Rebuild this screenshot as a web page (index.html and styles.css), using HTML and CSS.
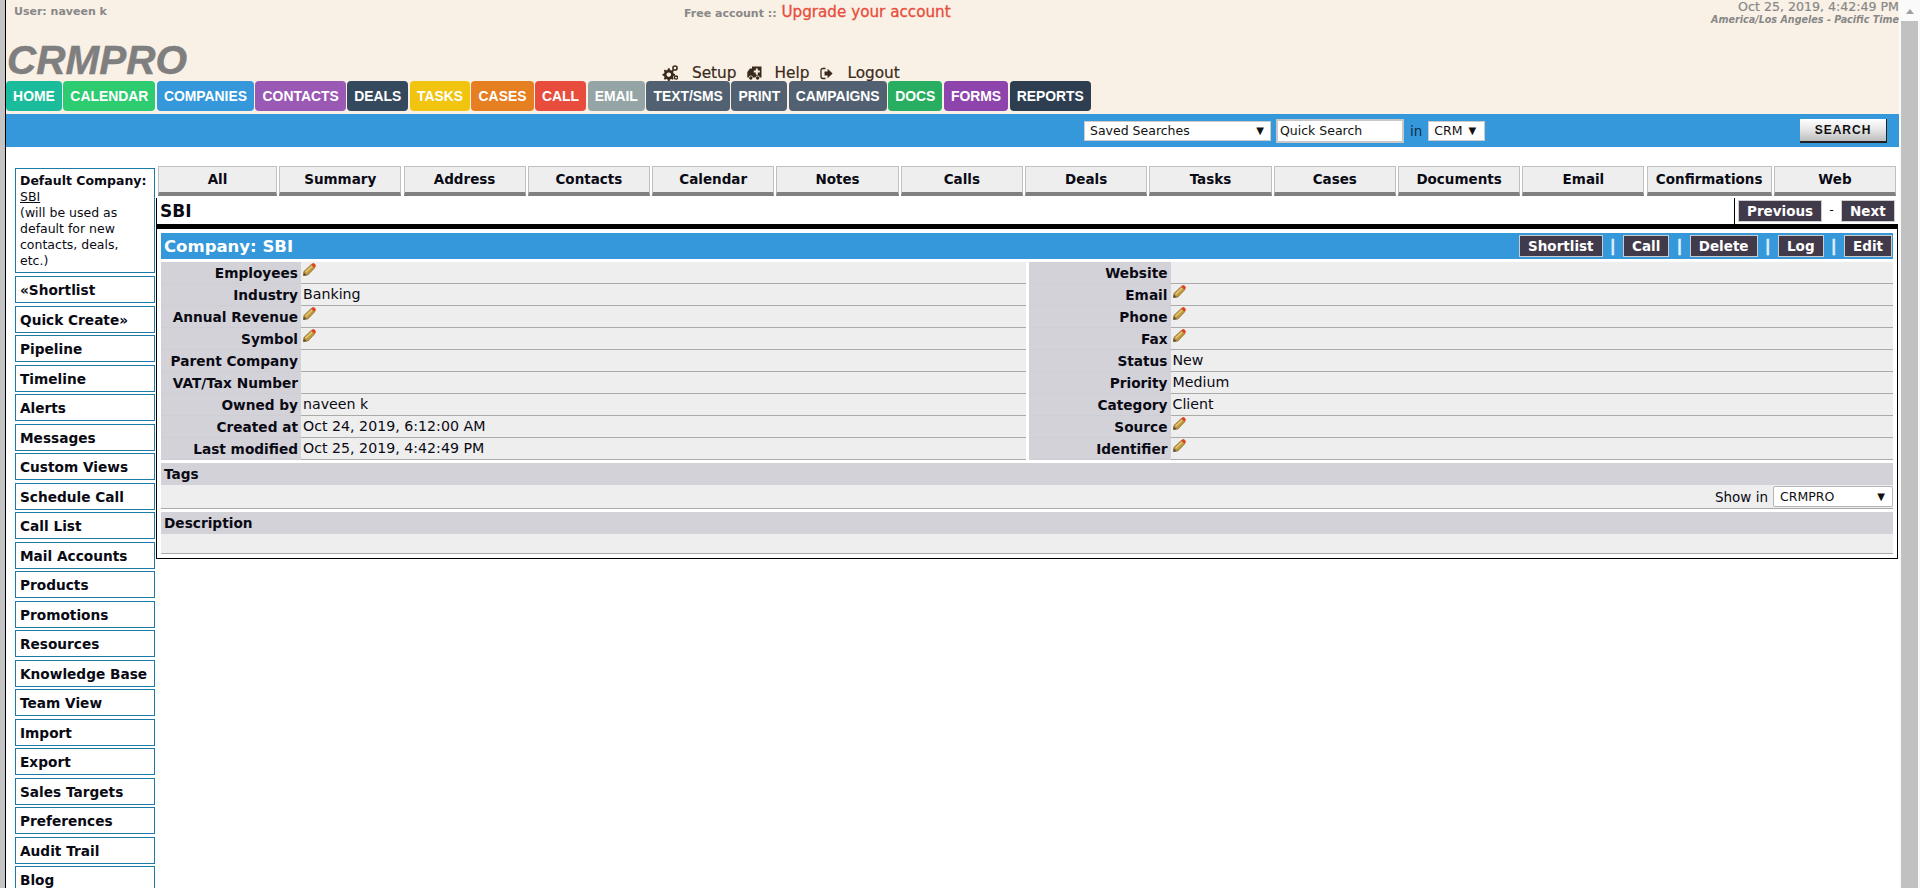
FILE: index.html
```html
<!DOCTYPE html>
<html lang="en">
<head>
    <meta charset="UTF-8">
    <title>CRMPRO - Company: SBI</title>
    <link rel="stylesheet" href="styles.css">
</head>
<body>
    <svg class="icon-defs" aria-hidden="true">
        <symbol id="pencil" viewBox="0 0 13 13">
            <path d="M0.5 12.5 L1 8.4 L8.4 1.4 L11.8 4.7 L4.8 12 Z" fill="#c39a3c" stroke="#87662a" stroke-width="0.8" stroke-linejoin="round"/>
            <path d="M2.6 9.2 L9 3.2" stroke="#e8cf7c" stroke-width="1.2"/>
            <path d="M0.3 12.7 L0.9 9.6 L3.5 12 Z" fill="#55504a"/>
            <path d="M8.4 1.4 L9.6 0.3 Q10.6 -0.2 11.6 0.7 L12.3 1.4 Q13.2 2.4 12.6 3.4 L11.8 4.7 Z" fill="#e8401c"/>
        </symbol>
    </svg>

    <div class="edge-strip"></div>

    <div class="page">
        <header class="top">
            <div class="top-row">
                <div class="user">User: naveen k</div>
                <div class="account">Free account :: <a class="upgrade">Upgrade your account</a></div>
                <div class="clock">
                    <div class="clock-date">Oct 25, 2019, 4:42:49 PM</div>
                    <div class="clock-zone">America/Los Angeles - Pacific Time</div>
                </div>
            </div>
            <div class="logo-row">
                <div class="logo">CRMPRO</div>
                <div class="tools">
                    <svg class="tool-icon gears" viewBox="0 0 16 16">
                        <path d="M6 3.2 L7.6 3.2 L8 4.8 L9.4 5.4 L10.8 4.6 L11.9 5.8 L11.1 7.1 L11.6 8.5 L13 8.9 L13 10.5 L11.6 10.9 L11 12.3 L11.8 13.6 L10.7 14.7 L9.4 13.9 L8 14.5 L7.6 16 L6 16 L5.6 14.5 L4.2 13.9 L2.9 14.7 L1.8 13.6 L2.6 12.3 L2 10.9 L0.5 10.5 L0.5 8.9 L2 8.5 L2.6 7.1 L1.8 5.8 L2.9 4.6 L4.2 5.4 L5.6 4.8 Z M6.8 7.4 A2.3 2.3 0 1 0 6.81 7.4 Z" fill="#3a2a1c" fill-rule="evenodd"/>
                        <circle cx="13" cy="3" r="2.1" fill="none" stroke="#3a2a1c" stroke-width="1.5"/>
                        <circle cx="14" cy="12.6" r="1.6" fill="none" stroke="#3a2a1c" stroke-width="1.3"/>
                    </svg>
                    <a class="tool-link">Setup</a>
                    <svg class="tool-icon ambulance" viewBox="0 0 15 14">
                        <path d="M5 0.5 H14.5 V11.5 H12.6 A2 2 0 0 0 8.6 11.5 H5.8 A2 2 0 0 0 1.8 11.5 H0.3 V6 L3 2.5 H5 Z M8.8 2.5 V4.6 H6.8 V6.6 H8.8 V8.7 H10.8 V6.6 H12.8 V4.6 H10.8 V2.5 Z" fill="#3a2a1c" fill-rule="evenodd"/>
                        <circle cx="3.8" cy="12" r="1.7" fill="#3a2a1c"/>
                        <circle cx="10.6" cy="12" r="1.7" fill="#3a2a1c"/>
                    </svg>
                    <a class="tool-link">Help</a>
                    <svg class="tool-icon signout" viewBox="0 0 13 13">
                        <path d="M5.5 1.5 H3 Q1 1.5 1 3.5 V9.5 Q1 11.5 3 11.5 H5.5" fill="none" stroke="#3a2a1c" stroke-width="1.3"/>
                        <path d="M4.5 4.6 H7.6 V1.8 L12.6 6.5 L7.6 11.2 V8.4 H4.5 Z" fill="#3a2a1c"/>
                    </svg>
                    <a class="tool-link">Logout</a>
                </div>
            </div>
            <nav class="main-nav">
                <a class="nav-btn c-home">HOME</a>
                <a class="nav-btn c-calendar">CALENDAR</a>
                <a class="nav-btn c-companies">COMPANIES</a>
                <a class="nav-btn c-contacts">CONTACTS</a>
                <a class="nav-btn c-deals">DEALS</a>
                <a class="nav-btn c-tasks">TASKS</a>
                <a class="nav-btn c-cases">CASES</a>
                <a class="nav-btn c-call">CALL</a>
                <a class="nav-btn c-email">EMAIL</a>
                <a class="nav-btn c-slate">TEXT/SMS</a>
                <a class="nav-btn c-slate">PRINT</a>
                <a class="nav-btn c-slate">CAMPAIGNS</a>
                <a class="nav-btn c-docs">DOCS</a>
                <a class="nav-btn c-forms">FORMS</a>
                <a class="nav-btn c-reports">REPORTS</a>
            </nav>
        </header>

        <div class="search-bar">
            <div class="fake-select saved-select"><span>Saved Searches</span><span class="arrow">▼</span></div>
            <input class="quick-search" type="text" value="Quick Search">
            <span class="search-in">in</span>
            <div class="fake-select crm-select"><span>CRM</span><span class="arrow">▼</span></div>
            <button class="search-btn" type="button">SEARCH</button>
        </div>

        <div class="columns">
            <aside class="sidebar">
                <div class="side-box default-box">
                    <strong>Default Company:</strong><br>
                    <a class="default-link">SBI</a><br>
                    (will be used as default for new contacts, deals, etc.)
                </div>
                <a class="side-box side-item">«Shortlist</a>
                <a class="side-box side-item">Quick Create»</a>
                <a class="side-box side-item">Pipeline</a>
                <a class="side-box side-item">Timeline</a>
                <a class="side-box side-item">Alerts</a>
                <a class="side-box side-item">Messages</a>
                <a class="side-box side-item">Custom Views</a>
                <a class="side-box side-item">Schedule Call</a>
                <a class="side-box side-item">Call List</a>
                <a class="side-box side-item">Mail Accounts</a>
                <a class="side-box side-item">Products</a>
                <a class="side-box side-item">Promotions</a>
                <a class="side-box side-item">Resources</a>
                <a class="side-box side-item">Knowledge Base</a>
                <a class="side-box side-item">Team View</a>
                <a class="side-box side-item">Import</a>
                <a class="side-box side-item">Export</a>
                <a class="side-box side-item">Sales Targets</a>
                <a class="side-box side-item">Preferences</a>
                <a class="side-box side-item">Audit Trail</a>
                <a class="side-box side-item">Blog</a>
            </aside>

            <main class="content">
                <div class="tabs">
                    <a class="tab">All</a>
                    <a class="tab">Summary</a>
                    <a class="tab">Address</a>
                    <a class="tab">Contacts</a>
                    <a class="tab">Calendar</a>
                    <a class="tab">Notes</a>
                    <a class="tab">Calls</a>
                    <a class="tab">Deals</a>
                    <a class="tab">Tasks</a>
                    <a class="tab">Cases</a>
                    <a class="tab">Documents</a>
                    <a class="tab">Email</a>
                    <a class="tab">Confirmations</a>
                    <a class="tab">Web</a>
                </div>

                <div class="title-row">
                    <div class="record-name">SBI</div>
                    <div class="pager">
                        <a class="dark-btn">Previous</a>
                        <span class="pager-dash">-</span>
                        <a class="dark-btn">Next</a>
                    </div>
                </div>

                <section class="panel">
                    <div class="panel-head">
                        <div class="panel-title">Company: SBI</div>
                        <div class="panel-actions">
                            <a class="dark-btn">Shortlist</a>
                            <span class="sep">|</span>
                            <a class="dark-btn">Call</a>
                            <span class="sep">|</span>
                            <a class="dark-btn">Delete</a>
                            <span class="sep">|</span>
                            <a class="dark-btn">Log</a>
                            <span class="sep">|</span>
                            <a class="dark-btn">Edit</a>
                        </div>
                    </div>

                    <div class="info">
                        <table class="info-table left-table">
                            <tr><th>Employees</th><td><svg class="pencil"><use href="#pencil"/></svg></td></tr>
                            <tr><th>Industry</th><td>Banking</td></tr>
                            <tr><th>Annual Revenue</th><td><svg class="pencil"><use href="#pencil"/></svg></td></tr>
                            <tr><th>Symbol</th><td><svg class="pencil"><use href="#pencil"/></svg></td></tr>
                            <tr><th>Parent Company</th><td></td></tr>
                            <tr><th>VAT/Tax Number</th><td></td></tr>
                            <tr><th>Owned by</th><td>naveen k</td></tr>
                            <tr><th>Created at</th><td>Oct 24, 2019, 6:12:00 AM</td></tr>
                            <tr><th>Last modified</th><td>Oct 25, 2019, 4:42:49 PM</td></tr>
                        </table>
                        <table class="info-table right-table">
                            <tr><th>Website</th><td></td></tr>
                            <tr><th>Email</th><td><svg class="pencil"><use href="#pencil"/></svg></td></tr>
                            <tr><th>Phone</th><td><svg class="pencil"><use href="#pencil"/></svg></td></tr>
                            <tr><th>Fax</th><td><svg class="pencil"><use href="#pencil"/></svg></td></tr>
                            <tr><th>Status</th><td>New</td></tr>
                            <tr><th>Priority</th><td>Medium</td></tr>
                            <tr><th>Category</th><td>Client</td></tr>
                            <tr><th>Source</th><td><svg class="pencil"><use href="#pencil"/></svg></td></tr>
                            <tr><th>Identifier</th><td><svg class="pencil"><use href="#pencil"/></svg></td></tr>
                        </table>
                    </div>

                    <div class="block-head">Tags</div>
                    <div class="tags-body">
                        <span>Show in</span>
                        <div class="fake-select show-select"><span>CRMPRO</span><span class="arrow">▼</span></div>
                    </div>

                    <div class="block-head">Description</div>
                    <div class="desc-body"></div>
                </section>
            </main>
        </div>
    </div>

    <div class="scrollbar">
        <div class="scroll-arrow"></div>
        <div class="scroll-thumb"></div>
    </div>
</body>
</html>
```

FILE: styles.css
```css
html, body {
    height: 100%;
}
body {
    margin: 0;
    height: 888px;
    overflow: hidden;
    display: flex;
    background-color: #fff;
    color: #0a0a14;
    font-family: "DejaVu Sans", Verdana, sans-serif;
    font-size: 12.5px;
}
.icon-defs {
    position: absolute;
    width: 0;
    height: 0;
}
.edge-strip {
    width: 5px;
    flex: none;
    background-color: #c4c4c4;
    border-right: 1px solid #000;
}
.page {
    flex: 1;
    min-width: 0;
}

/* header */
.top {
    background-color: #f9f1e6;
    height: 114px;
}
.top-row {
    display: flex;
    height: 40px;
    color: #888;
    font-weight: bold;
}
.user {
    margin-left: 8px;
    margin-top: 5px;
    font-size: 11px;
    line-height: 14px;
    width: 670px;
}
.account {
    font-size: 11px;
    line-height: 24px;
    white-space: nowrap;
}
.upgrade {
    color: #e74c3c;
    font-size: 15.2px;
    font-weight: normal;
    -webkit-text-stroke: 0.3px #e74c3c;
    margin-left: 1px;
}
.clock {
    margin-left: auto;
    text-align: right;
    white-space: nowrap;
}
.clock-date {
    font-size: 12.6px;
    font-weight: normal;
    line-height: 14px;
    -webkit-text-stroke: 0.2px #888;
}
.clock-zone {
    font-size: 9.6px;
    font-style: italic;
    line-height: 11px;
}
.logo-row {
    display: flex;
    height: 41px;
}
.logo {
    width: 653px;
    margin-left: 1px;
    margin-top: -2px;
    color: #7f7f7f;
    font-family: "Liberation Sans", Arial, sans-serif;
    font-size: 40.5px;
    font-style: italic;
    font-weight: bold;
    line-height: 44px;
    -webkit-text-stroke: 0.5px #7f7f7f;
}
.tools {
    display: flex;
    align-items: center;
    height: 20px;
    margin-top: 23px;
    color: #3a2a1c;
    font-size: 15.3px;
    -webkit-text-stroke: 0.2px #3a2a1c;
}
.tool-icon {
    flex: none;
}
.gears {
    width: 16px;
    height: 16px;
    margin-left: 2px;
    margin-right: 14px;
}
.ambulance {
    width: 15px;
    height: 14px;
    margin-left: 10px;
    margin-right: 13px;
}
.signout {
    width: 13px;
    height: 13px;
    margin-left: 11px;
    margin-right: 14px;
}
.main-nav {
    display: flex;
    gap: 1.4px;
}
.nav-btn {
    height: 30px;
    padding: 0 7.1px;
    border-radius: 4px;
    color: #fff;
    font-family: "Liberation Sans", Arial, sans-serif;
    font-size: 13.9px;
    font-weight: bold;
    line-height: 30px;
    white-space: nowrap;
}
.c-home { background-color: #1abc9c; }
.c-calendar { background-color: #2ecc71; }
.c-companies { background-color: #3498db; }
.c-contacts { background-color: #9b59b6; }
.c-deals { background-color: #34495e; }
.c-tasks { background-color: #f1c40f; }
.c-cases { background-color: #e67e22; }
.c-call { background-color: #e74c3c; }
.c-email { background-color: #95a5a6; }
.c-slate { background-color: #526172; }
.c-docs { background-color: #27ae60; }
.c-forms { background-color: #8e44ad; }
.c-reports { background-color: #2c3e50; }

/* search bar */
.search-bar {
    display: flex;
    align-items: center;
    height: 33px;
    padding-left: 1078px;
    padding-right: 12px;
    background-color: #3498db;
    font-size: 12.5px;
}
.fake-select {
    display: flex;
    align-items: center;
    justify-content: space-between;
    box-sizing: border-box;
    height: 20px;
    background-color: #fff;
    border: 1px solid #ccc;
    color: #111;
}
.arrow {
    font-size: 10px;
}
.saved-select {
    width: 187px;
    padding: 0 6px 0 5px;
}
.crm-select {
    width: 57px;
    padding: 0 8px 0 5px;
}
.quick-search {
    box-sizing: border-box;
    width: 128px;
    height: 24px;
    margin-left: 5px;
    padding: 0 2px;
    border: 2px solid #c8c8c8;
    background-color: #fff;
    color: #111;
    font-family: inherit;
    font-size: 12.5px;
}
.search-in {
    margin: 0 6px;
    color: #12304a;
    font-size: 13.5px;
}
.search-btn {
    box-sizing: border-box;
    width: 87px;
    height: 24px;
    margin-left: auto;
    padding: 0;
    border: none;
    border-right: 1px solid #222;
    border-bottom: 2px solid #222;
    background: linear-gradient(#fff, #e8e8e8 45%, #bdbdbd);
    color: #111;
    font-family: "Liberation Sans", Arial, sans-serif;
    font-size: 12px;
    font-weight: bold;
    letter-spacing: 1px;
}

/* sidebar */
.columns {
    display: flex;
}
.sidebar {
    flex: none;
    display: flex;
    flex-direction: column;
    gap: 2.5px;
    width: 140px;
    margin-left: 9px;
    margin-top: 21px;
    margin-right: 1px;
}
.side-box {
    box-sizing: border-box;
    flex: none;
    border: 1px solid #1b7ba6;
    padding-left: 4px;
    background-color: #fff;
}
.default-box {
    height: 105px;
    margin-bottom: 0.5px;
    padding-top: 4px;
    padding-right: 16px;
    line-height: 16px;
    font-size: 12.5px;
}
.default-box strong {
    white-space: nowrap;
}
.default-link {
    text-decoration: underline;
}
.side-item {
    height: 27px;
    font-size: 13.7px;
    font-weight: bold;
    line-height: 26px;
    white-space: nowrap;
}

/* tabs */
.content {
    flex: 1;
    min-width: 0;
    margin-top: 19px;
}
.tabs {
    display: grid;
    grid-template-columns: 119px repeat(11, 1fr) 125px 1fr;
    gap: 2.2px;
    padding: 0 3px 0 2px;
}
.tab {
    box-sizing: border-box;
    height: 30px;
    border: 1px solid #c0c0c0;
    border-bottom: 4px solid #808080;
    background-color: #eee;
    font-size: 13.5px;
    font-weight: bold;
    line-height: 25px;
    text-align: center;
    white-space: nowrap;
}
.title-row {
    display: flex;
    justify-content: space-between;
    height: 26px;
    margin-top: 2px;
    border-left: 1px solid #000;
}
.record-name {
    margin-left: 3px;
    font-size: 17px;
    font-weight: bold;
    line-height: 26px;
}
.pager {
    display: flex;
    align-items: flex-start;
    box-sizing: border-box;
    width: 165px;
    padding-top: 2px;
    padding-left: 3px;
    border-left: 1px solid #000;
}
.pager-dash {
    width: 19px;
    line-height: 20px;
    text-align: center;
}
.dark-btn {
    box-sizing: border-box;
    height: 22px;
    padding: 0 8px;
    border: 1px solid #ccc;
    background-color: #413a4b;
    color: #fff;
    font-weight: bold;
    font-size: 13.5px;
    line-height: 20px;
    white-space: nowrap;
}

/* company panel */
.panel {
    box-sizing: border-box;
    height: 335px;
    margin-right: 1px;
    padding: 4px;
    border: 1px solid #000;
    border-top: 5px solid #000;
}
.panel-head {
    display: flex;
    align-items: center;
    justify-content: space-between;
    height: 26px;
    margin-bottom: 3px;
    padding: 0 1px 0 3px;
    background-color: #3498db;
}
.panel-title {
    color: #fff;
    font-size: 16.5px;
    font-weight: bold;
}
.panel-actions {
    display: flex;
    align-items: center;
    gap: 7.5px;
}
.sep {
    color: #e4f2fc;
    font-weight: bold;
    font-size: 15px;
    -webkit-text-stroke: 0.6px #e4f2fc;
}
.info {
    display: flex;
    gap: 3px;
}
.info-table {
    width: 865px;
    border-collapse: separate;
    border-spacing: 0;
    table-layout: fixed;
}
.info-table th {
    height: 22px;
    box-sizing: border-box;
    padding: 0 3px 0 0;
    background-color: #d4d2d9;
    border-bottom: 1px solid #d0ced5;
    font-size: 13.7px;
    text-align: right;
    white-space: nowrap;
}
.info-table td {
    height: 22px;
    box-sizing: border-box;
    padding: 0 0 2px 2px;
    background-color: #eee;
    border-bottom: 1px solid #aaa;
    font-size: 14.2px;
}
.left-table th {
    width: 140px;
}
.right-table th {
    width: 142px;
}
.pencil {
    display: block;
    width: 13px;
    height: 13px;
    margin-bottom: 4px;
}
.block-head {
    height: 22px;
    margin-top: 3px;
    padding-left: 3px;
    background-color: #d4d2d9;
    font-size: 13.7px;
    font-weight: bold;
    line-height: 22px;
}
.tags-body {
    display: flex;
    align-items: center;
    justify-content: flex-end;
    gap: 5px;
    box-sizing: border-box;
    height: 24px;
    background-color: #eee;
    border-bottom: 1px solid #aaa;
    font-size: 13.5px;
}
.show-select {
    width: 120px;
    height: 21px;
    padding: 0 7px 0 6px;
    border: 1px solid #b5b5b5;
    border-radius: 2px;
    font-size: 12.5px;
}
.desc-body {
    box-sizing: border-box;
    height: 20px;
    background-color: #eee;
    border-bottom: 1px solid #aaa;
}

/* page scrollbar */
.scrollbar {
    flex: none;
    width: 21px;
    box-sizing: border-box;
    padding: 0 2px;
    background-color: #fafafa;
}
.scroll-arrow {
    width: 0;
    height: 0;
    margin: 9px auto 7px;
    border-left: 4.5px solid transparent;
    border-right: 4.5px solid transparent;
    border-bottom: 5px solid #a0a0a0;
}
.scroll-thumb {
    height: 870px;
    background-color: #c1c1c1;
}
```
